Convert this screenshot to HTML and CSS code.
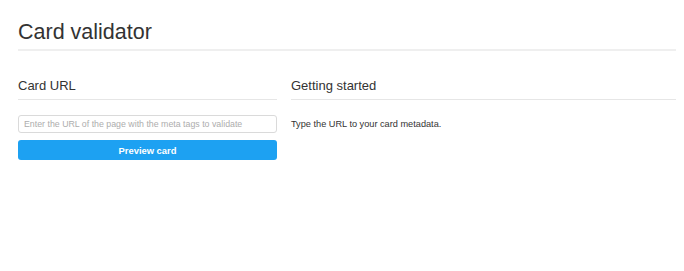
FILE: index.html
```html
<!DOCTYPE html>
<html>
<head>
<meta charset="utf-8">
<link rel="stylesheet" href="styles.css">
</head>
<body>
<div class="page">
  <h1 class="title">Card validator</h1>
  <div class="cols">
    <div class="col left">
      <h2 class="section">Card URL</h2>
      <div class="form">
        <input class="url" type="text" placeholder="Enter the URL of the page with the meta tags to validate">
        <button class="btn">Preview card</button>
      </div>
    </div>
    <div class="col right">
      <h2 class="section">Getting started</h2>
      <p class="info">Type the URL to your card metadata.</p>
    </div>
  </div>
</div>
</body>
</html>
```
FILE: styles.css
```css
html, body {
  margin: 0;
  padding: 0;
  background: #fff;
}
body {
  font-family: "Liberation Sans", Arial, sans-serif;
  color: #333;
}
.page {
  padding: 20px 8px 0 18px;
}
.title {
  margin: 0;
  font-size: 21.5px;
  font-weight: normal;
  line-height: 25px;
  color: #333;
  padding-bottom: 4px;
  border-bottom: 2px solid #efefef;
}
.cols {
  display: flex;
  gap: 14px;
  margin-top: 27px;
}
.left {
  width: 259px;
  flex: none;
}
.right {
  flex: 1;
}
.section {
  margin: 0;
  font-size: 13px;
  font-weight: normal;
  line-height: 16px;
  color: #333;
  padding-bottom: 5px;
  border-bottom: 1px solid #e6e6e6;
}
.form {
  margin-top: 15px;
  display: flex;
  flex-direction: column;
  gap: 7px;
}
.url {
  box-sizing: border-box;
  height: 18px;
  width: 100%;
  margin: 0;
  padding: 0 5px;
  border: 1px solid #dadada;
  border-radius: 3px;
  font-family: "Liberation Sans", Arial, sans-serif;
  font-size: 8.8px;
  color: #333;
  outline: none;
}
.url::placeholder {
  color: #adadad;
}
.btn {
  box-sizing: border-box;
  height: 20px;
  width: 100%;
  margin: 0;
  padding: 0;
  border: none;
  border-radius: 3px;
  background: #1da1f2;
  color: #fff;
  font-family: "Liberation Sans", Arial, sans-serif;
  font-size: 9.4px;
  font-weight: bold;
}
.info {
  margin: 18px 0 0;
  font-size: 9.2px;
  line-height: 12px;
  color: #333;
}
```
